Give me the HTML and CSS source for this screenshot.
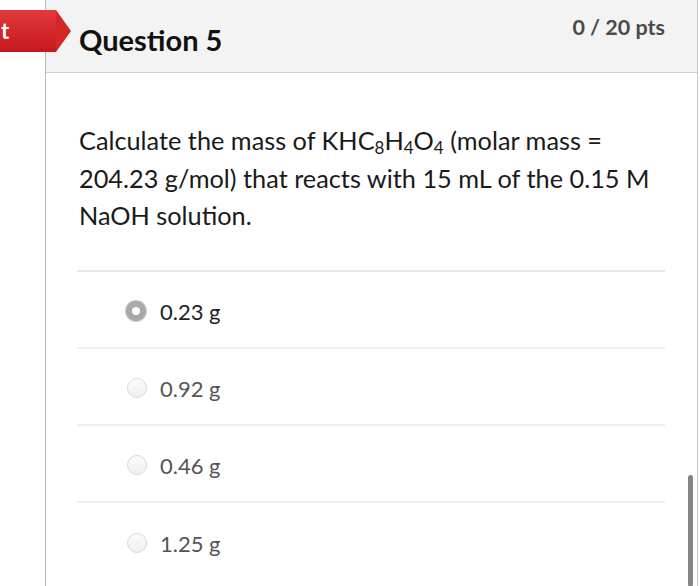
FILE: index.html
```html
<!DOCTYPE html>
<html>
<head>
<meta charset="utf-8">
<link rel="stylesheet" href="styles.css">
</head>
<body>
<div class="page">
  <div class="side"></div>
  <div class="panel">
    <div class="header">
      <div class="tag"><span class="tag-text">t</span></div>
      <h2 class="title">Question 5</h2>
      <div class="pts">0 / 20 pts</div>
    </div>
    <div class="body">
      <p class="question">Calculate the mass of KHC<sub>8</sub>H<sub>4</sub>O<sub>4</sub> (molar mass = 204.23 g/mol) that reacts with 15 mL of the 0.15 M NaOH solution.</p>
      <div class="answers">
        <div class="answer"><span class="radio selected"></span><span class="label">0.23 g</span></div>
        <div class="answer"><span class="radio"></span><span class="label">0.92 g</span></div>
        <div class="answer"><span class="radio"></span><span class="label">0.46 g</span></div>
        <div class="answer"><span class="radio"></span><span class="label">1.25 g</span></div>
      </div>
    </div>
  </div>
  <div class="scrollbar"></div>
</div>
</body>
</html>
```
FILE: styles.css
```css
html, body {
  margin: 0;
  padding: 0;
  background: #fff;
  font-family: Lato, "Liberation Sans", sans-serif;
  color: #222;
}
.page {
  position: relative;
  display: flex;
  width: 700px;
  height: 586px;
  overflow: hidden;
}
.side {
  width: 45px;
  flex: none;
  border-right: 1px solid #b8b8b8;
}
.panel {
  width: 651px;
  flex: none;
  border-right: 1px solid #c8c8c8;
}
.header {
  position: relative;
  height: 72px;
  background: #f3f3f3;
  border-bottom: 1px solid #cfcfcf;
  display: flex;
  justify-content: space-between;
  align-items: flex-start;
  padding: 0 32px 0 33px;
}
.tag {
  position: absolute;
  left: -47px;
  top: 10px;
  width: 57px;
  height: 42px;
  background: linear-gradient(#e23a3d, #c5171c);
  display: flex;
  align-items: center;
}
.tag::after {
  content: "";
  position: absolute;
  right: -15px;
  top: 0;
  border-top: 21px solid transparent;
  border-bottom: 21px solid transparent;
  border-left: 15px solid #d42629;
}
.tag-text {
  color: #fff;
  font-weight: 700;
  font-size: 22px;
  margin-left: 2px;
  margin-top: -2px;
}
.title {
  margin: 22px 0 0;
  font-size: 29px;
  font-weight: 700;
  color: #111;
  line-height: 36px;
}
.pts {
  margin-top: 13px;
  font-size: 21.5px;
  font-weight: 700;
  color: #4a4a4a;
  line-height: 28px;
}
.body {
  padding: 0 32px 0 31px;
}
.question {
  margin: 0;
  padding: 49px 0 0 2px;
  font-size: 25.3px;
  line-height: 37.5px;
  color: #1a1a1a;
  height: 148px;
}
.question sub {
  font-size: 17px;
  vertical-align: -4px;
  line-height: 0;
}
.answers {
  border-top: 2px solid #e8e8e8;
}
.answer {
  box-sizing: border-box;
  height: 77px;
  border-bottom: 2px solid #efefef;
  display: flex;
  align-items: center;
  padding: 4px 0 0 50px;
}
.answer:last-child {
  border-bottom: none;
}
.radio {
  width: 18px;
  height: 18px;
  border-radius: 50%;
  border: 1px solid #d9d9d9;
  background: linear-gradient(#fbfbfb, #f0f0f0);
  box-sizing: content-box;
  margin-right: 13px;
  margin-top: -2px;
}
.radio.selected {
  width: 8px;
  height: 8px;
  border: 6px solid #a9a9a9;
  background: #fff;
  box-shadow: 0 0 0 1px #c8c8c8;
  margin-right: 14px;
  margin-left: -1px;
}
.label {
  font-size: 22px;
  color: #555;
}
.answer:first-child .label { color: #222; }
.scrollbar {
  position: absolute;
  left: 688px;
  top: 475px;
  width: 5px;
  height: 112px;
  border-radius: 3px;
  background: #858585;
}
```
